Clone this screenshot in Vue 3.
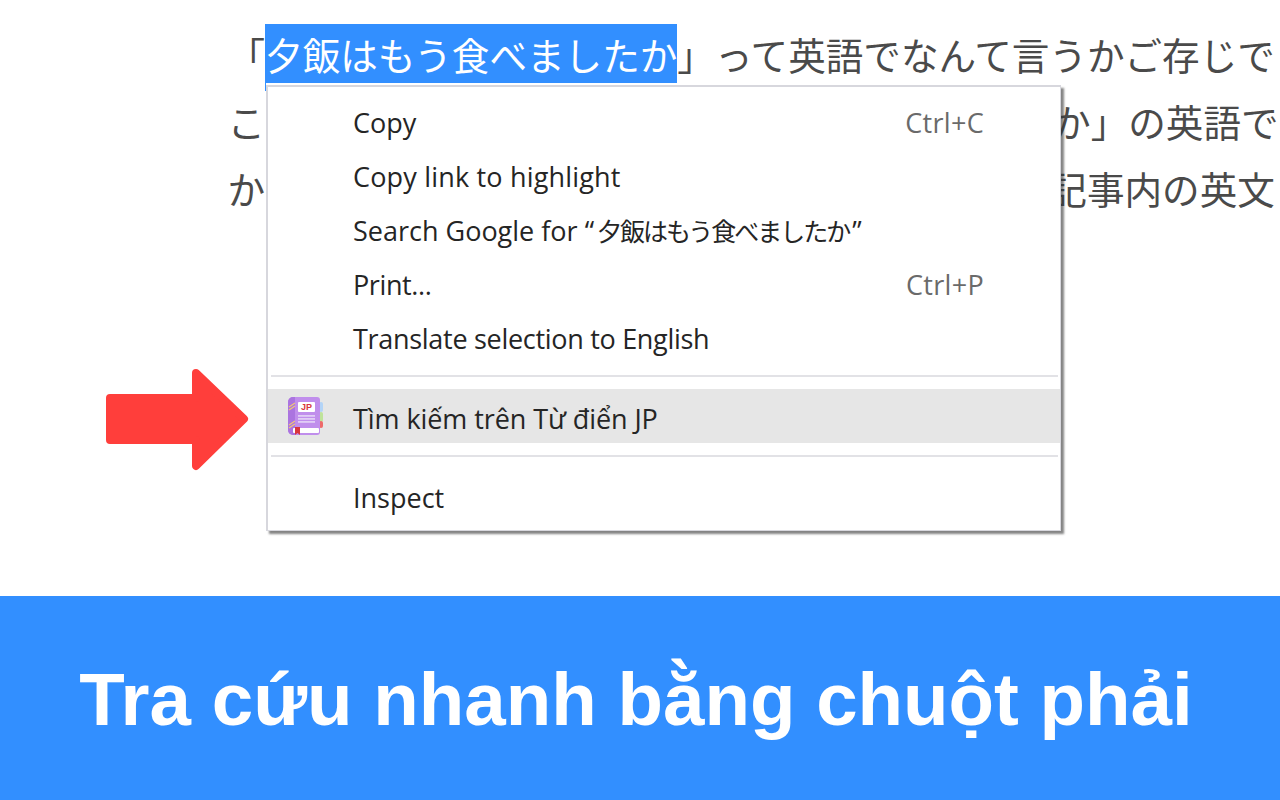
<script setup>
const items = [
  { label: 'Copy', key: 'Ctrl+C' },
  { label: 'Copy link to highlight', tone: 'wide' },
  { label: 'Search Google for “', cjk: '夕飯はもう食べましたか', tail: '”' },
  { label: 'Print...', key: 'Ctrl+P', tone: 'tight' },
  { label: 'Translate selection to English', tone: 'narrow' },
]
</script>

<template>
  <div class="page">
    <section class="stage">
      <div class="article">
        <p class="line">「<span class="selected">夕飯はもう食べましたか</span>」って英語でなんて言うかご存じで</p>
        <p class="line">この記事では今回の質問「夕飯はもう食べましたか」の英語で</p>
        <p class="line third">かんたんな言い方を紹介します。そして最後には記事内の英文</p>
      </div>
      <i class="caret"></i>

      <svg class="arrow" width="150" height="110" viewBox="100 365 150 110">
        <path d="M110 398H196V373L244 419L196 466V440H110Z" fill="#ff3e3b" stroke="#ff3e3b" stroke-width="8" stroke-linejoin="round" />
      </svg>

      <div class="menu">
        <div v-for="item in items" :key="item.label" class="row">
          <span :class="item.tone">{{ item.label }}<span v-if="item.cjk" class="cjk">{{ item.cjk }}</span>{{ item.tail }}</span>
          <span v-if="item.key" class="shortcut">{{ item.key }}</span>
        </div>
        <div class="sep sep-a"></div>
        <div class="row active">
          <svg class="book" width="36" height="38" viewBox="0 0 36 38">
            <rect x="31" y="5" width="4" height="10" rx="2" fill="#b3d4f7" />
            <rect x="31" y="15" width="4" height="10" rx="2" fill="#bfe39a" />
            <rect x="31" y="24" width="4" height="7" rx="2" fill="#ee6a6a" />
            <path d="M5 0H29a3 3 0 0 1 3 3V35a3 3 0 0 1-3 3H5a5 5 0 0 1-5-5V5a5 5 0 0 1 5-5Z" fill="#c08eec" />
            <path d="M5 0H7V38H5a5 5 0 0 1-5-5V5a5 5 0 0 1 5-5Z" fill="#ab74e0" />
            <path d="M1 10L7 6M1 13L7 9M1 28L7 24M1 31L7 27" stroke="#efc877" stroke-width="1.2" fill="none" />
            <rect x="10" y="5" width="17" height="10" rx="1" fill="#fff" />
            <text x="18.5" y="13.4" class="jp">JP</text>
            <rect x="10" y="18" width="17" height="1.8" fill="#e0cdf5" />
            <rect x="10" y="21" width="17" height="1.8" fill="#e0cdf5" />
            <rect x="10" y="24" width="17" height="1.8" fill="#e0cdf5" />
            <rect x="5" y="31" width="26" height="5" rx="1" fill="#fff" />
            <path d="M7 30H12V38L9.5 36L7 38Z" fill="#d9363e" />
          </svg>
          <span class="find">Tìm kiếm trên Từ điển JP</span>
        </div>
        <div class="sep sep-b"></div>
        <div class="row last">
          <span>Inspect</span>
        </div>
      </div>
    </section>

    <section class="banner">
      <h1>Tra cứu nhanh bằng chuột phải</h1>
    </section>
  </div>
</template>

<style>
html, body {
  margin: 0;
  background: #fff;
}
</style>

<style scoped>
.page {
  width: 1280px;
  height: 800px;
  display: flex;
  flex-direction: column;
  overflow: hidden;
}
.stage {
  position: relative;
  height: 596px;
  overflow: hidden;
  background: #fff;
}
.article {
  padding: 24px 0 0 227.5px;
}
.line {
  margin: 0 0 7.5px;
  height: 59px;
  line-height: 59px;
  white-space: nowrap;
  font-family: "Noto Sans CJK JP", "Noto Sans", sans-serif;
  font-weight: 400;
  font-size: 37.6px;
  color: #4a4a4a;
}
.third {
  margin-top: 8px;
}
.selected {
  display: inline-block;
  height: 59px;
  background: #328fff;
  color: #fff;
}
.caret {
  position: absolute;
  left: 265px;
  top: 83px;
  width: 1px;
  height: 8px;
  background: #328fff;
}
.arrow {
  position: absolute;
  left: 100px;
  top: 365px;
}
.menu {
  position: absolute;
  left: 266px;
  top: 85px;
  width: 795px;
  height: 446px;
  box-sizing: border-box;
  padding-top: 8px;
  border: 2px solid #d7d7dd;
  border-right-width: 1px;
  border-bottom-width: 1px;
  background: #fff;
  box-shadow: 3px 3px 2px rgba(50, 50, 50, 0.6);
  font-family: "Open Sans", "Noto Sans CJK JP", sans-serif;
  font-size: 27px;
  color: #252525;
}
.row {
  position: relative;
  box-sizing: border-box;
  display: flex;
  justify-content: space-between;
  align-items: center;
  height: 54px;
  padding: 0 76px 0 85px;
  white-space: nowrap;
}
.wide {
  letter-spacing: 0.18px;
}
.narrow {
  letter-spacing: -0.3px;
}
.tight {
  letter-spacing: -0.4px;
}
.find {
  letter-spacing: -0.08px;
}
.cjk {
  margin-left: 3px;
  margin-right: 3px;
  font-size: 25px;
  letter-spacing: -2px;
  font-family: "Noto Sans CJK JP", sans-serif;
}
.active {
  padding-top: 4px;
  background: #e6e6e6;
}
.last {
  padding-bottom: 2px;
}
.shortcut {
  color: #6a6a6a;
  letter-spacing: 0.3px;
}
.book {
  position: absolute;
  left: 20px;
  top: 8px;
}
.jp {
  font-family: "Liberation Sans", sans-serif;
  font-weight: 700;
  font-size: 9px;
  fill: #d9363e;
  text-anchor: middle;
}
.sep {
  height: 2px;
  margin-left: 3px;
  margin-right: 2px;
  background: #e2e2e6;
}
.sep-a {
  margin-top: 10px;
  margin-bottom: 12px;
}
.sep-b {
  margin-top: 12px;
  margin-bottom: 14px;
}
.banner {
  flex: 1;
  display: flex;
  align-items: center;
  justify-content: center;
  padding: 4px 8px 0 0;
  background: #328fff;
}
.banner h1 {
  margin: 0;
  font-family: "Liberation Sans", Arial, sans-serif;
  font-weight: 700;
  font-size: 74.5px;
  line-height: 1;
  color: #fff;
  white-space: nowrap;
}
</style>
